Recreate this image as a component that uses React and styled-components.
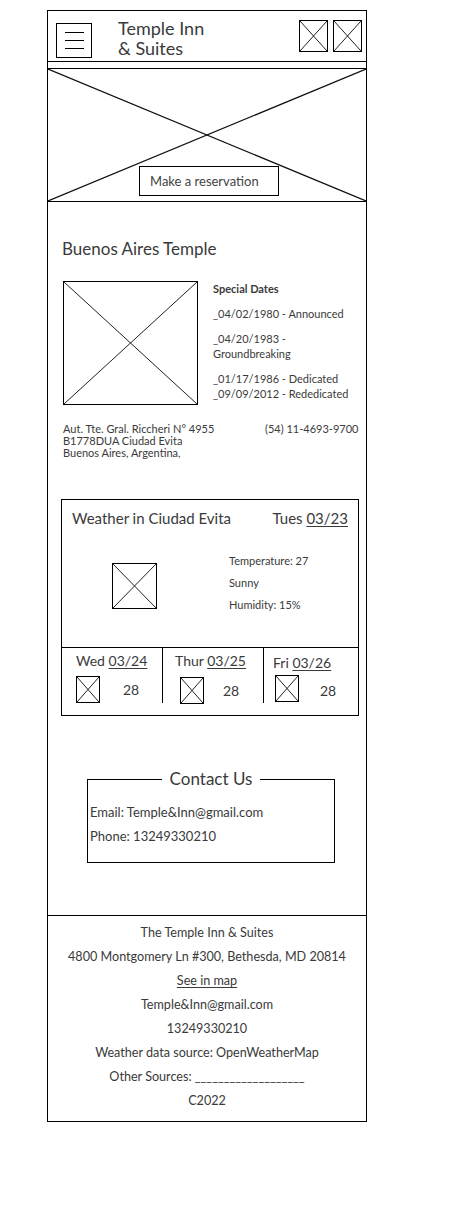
import React from 'react';
import styled, { createGlobalStyle } from 'styled-components';

const Global = createGlobalStyle`
  html, body { margin: 0; padding: 0; background: #fff; }
  body { font-family: Lato, "Noto Sans", sans-serif; color: #333; }
  *, *::before, *::after { box-sizing: border-box; }
`;

const Page = styled.div`
  padding: 10px 0 101px 47px;
`;

const Frame = styled.div`
  width: 320px;
  border: 1px solid #000;
  display: flex;
  flex-direction: column;
`;

/* ---------- placeholder (X box) ---------- */
const PhBox = styled.div`
  width: ${p => p.$w}px;
  height: ${p => p.$h}px;
  border: 1px solid #000;
  flex: none;
  svg { display: block; width: 100%; height: 100%; }
  line { stroke: #222; stroke-width: 1; vector-effect: non-scaling-stroke; }
`;

const XBox = ({ w, h }) => (
  <PhBox $w={w} $h={h}>
    <svg viewBox="0 0 100 100" preserveAspectRatio="none">
      <line x1="0" y1="0" x2="100" y2="100" />
      <line x1="100" y1="0" x2="0" y2="100" />
    </svg>
  </PhBox>
);

/* ---------- header ---------- */
const Header = styled.header`
  height: 51px;
  border-bottom: 1px solid #000;
  display: flex;
  align-items: flex-start;
  padding: 0 4px 0 8px;
`;

const Burger = styled.button`
  width: 36px;
  height: 35px;
  margin-top: 12px;
  border: 1px solid #000;
  background: #fff;
  padding: 0;
  display: flex;
  flex-direction: column;
  align-items: center;
  justify-content: center;
  gap: 7px;
  span {
    display: block;
    width: 19px;
    height: 1.3px;
    background: #000;
  }
`;

const Brand = styled.div`
  margin: 7px 0 0 26px;
  font-size: 18px;
  line-height: 20px;
  color: #3a3a3a;
`;

const HeaderIcons = styled.div`
  margin: 9px 0 0 auto;
  display: flex;
  gap: 5px;
`;

/* ---------- hero ---------- */
const Hero = styled.section`
  position: relative;
  margin: 6px -1px 0;
  height: 134px;
  border: 1.5px solid #000;
  display: flex;
  justify-content: center;
  align-items: flex-end;
  padding: 0 0 5px 4px;
  > svg {
    position: absolute;
    inset: 0;
    width: 100%;
    height: 100%;
  }
  line { stroke: #111; stroke-width: 1.2; vector-effect: non-scaling-stroke; }
`;

const ReserveButton = styled.button`
  position: relative;
  width: 140px;
  height: 30px;
  border: 1px solid #000;
  background: #fff;
  font-family: inherit;
  font-size: 13px;
  color: #444;
  text-align: left;
  padding: 0 0 0 10px;
`;

/* ---------- temple ---------- */
const Heading = styled.h1`
  margin: 37px 0 0 14px;
  font-size: 17px;
  line-height: 20px;
  font-weight: 400;
  color: #3a3a3a;
`;

const TempleRow = styled.div`
  margin-top: 22px;
  padding-left: 15px;
  display: flex;
  align-items: flex-start;
  gap: 15px;
`;

const Dates = styled.div`
  width: 140px;
  font-size: 11px;
  line-height: 15px;
  color: #3a3a3a;
  p { margin: 0 0 10px; }
  p:last-child { margin-bottom: 0; }
  strong { font-weight: 700; }
`;

const AddressRow = styled.div`
  margin-top: 18px;
  padding-left: 15px;
  display: grid;
  grid-template-columns: 202px auto;
  font-size: 11px;
  line-height: 12px;
  color: #3a3a3a;
`;

/* ---------- weather ---------- */
const Weather = styled.section`
  margin: 40px 0 0 13px;
  width: 298px;
  border: 1px solid #000;
`;

const WeatherTop = styled.div`
  height: 147px;
  padding: 8px 10px 0;
`;

const WeatherTitle = styled.div`
  display: flex;
  justify-content: space-between;
  font-size: 15px;
  line-height: 20px;
  color: #3a3a3a;
  u { text-decoration-thickness: 1px; text-underline-offset: 2px; }
`;

const WeatherBody = styled.div`
  display: flex;
  align-items: flex-start;
  margin-top: 22px;
  > div:first-child { margin: 13px 0 0 40px; }
`;

const Stats = styled.div`
  margin-left: 72px;
  font-size: 11px;
  line-height: 22px;
  color: #3a3a3a;
`;

const Forecast = styled.div`
  display: grid;
  grid-template-columns: 101px 101px 94px;
  border-top: 1px solid #000;
  padding-bottom: 12px;
`;

const DayCell = styled.div`
  height: 55px;
  border-right: ${p => (p.$last ? 'none' : '1px solid #000')};
  padding-top: ${p => p.$top}px;
  font-size: 14px;
  line-height: 18px;
  color: #3a3a3a;
  u { text-decoration-thickness: 1px; text-underline-offset: 2px; }
`;

const DayLabel = styled.div`
  padding-left: ${p => p.$indent}px;
`;

const DayTemp = styled.div`
  display: flex;
  align-items: center;
  margin-top: ${p => p.$gapTop}px;
  padding-left: ${p => p.$indent}px;
  gap: ${p => p.$gap}px;
  span { position: relative; top: ${p => p.$shift}px; }
`;

/* ---------- contact ---------- */
const Contact = styled.fieldset`
  margin: 53px 0 0 39px;
  width: 248px;
  border: 1px solid #000;
  padding: 11px 2px 14px;
  font-size: 13px;
  line-height: 24px;
  color: #3a3a3a;
  legend {
    margin: 0 auto;
    padding: 0 8px;
    font-size: 17px;
    line-height: 20px;
  }
`;

/* ---------- footer ---------- */
const Footer = styled.footer`
  margin-top: 52px;
  border-top: 1px solid #000;
  padding: 5px 0 8px;
  text-align: center;
  font-size: 12.6px;
  line-height: 24px;
  color: #3a3a3a;
  a { color: inherit; text-underline-offset: 2px; }
`;

const days = [
  { d: 'Wed', date: '03/24', top: 4, li: 14, ii: 14, gap: 23, gt: 6, sh: 0 },
  { d: 'Thur', date: '03/25', top: 4, li: 12, ii: 17, gap: 19, gt: 7, sh: 0 },
  { d: 'Fri', date: '03/26', top: 6, li: 9, ii: 11, gap: 21, gt: 3, sh: 2 },
];

export default function App() {
  return (
    <>
      <Global />
      <Page>
        <Frame>
          <Header>
            <Burger aria-label="menu">
              <span /><span /><span />
            </Burger>
            <Brand>Temple Inn<br />&amp; Suites</Brand>
            <HeaderIcons>
              <XBox w={29} h={32} />
              <XBox w={29} h={32} />
            </HeaderIcons>
          </Header>

          <Hero>
            <svg viewBox="0 0 100 100" preserveAspectRatio="none">
              <line x1="0" y1="0" x2="100" y2="100" />
              <line x1="100" y1="0" x2="0" y2="100" />
            </svg>
            <ReserveButton>Make a reservation</ReserveButton>
          </Hero>

          <Heading>Buenos Aires Temple</Heading>
          <TempleRow>
            <XBox w={135} h={124} />
            <Dates>
              <p><strong>Special Dates</strong></p>
              <p>_04/02/1980 - Announced</p>
              <p>_04/20/1983 - Groundbreaking</p>
              <p>_01/17/1986 - Dedicated<br />_09/09/2012 - Rededicated</p>
            </Dates>
          </TempleRow>
          <AddressRow>
            <div>Aut. Tte. Gral. Riccheri N° 4955<br />B1778DUA Ciudad Evita<br />Buenos Aires, Argentina,</div>
            <div>(54) 11-4693-9700</div>
          </AddressRow>

          <Weather>
            <WeatherTop>
              <WeatherTitle>
                <span>Weather in Ciudad Evita</span>
                <span>Tues <u>03/23</u></span>
              </WeatherTitle>
              <WeatherBody>
                <XBox w={45} h={46} />
                <Stats>
                  Temperature: 27<br />Sunny<br />Humidity: 15%
                </Stats>
              </WeatherBody>
            </WeatherTop>
            <Forecast>
              {days.map((x, i) => (
                <DayCell key={x.d} $top={x.top} $last={i === days.length - 1}>
                  <DayLabel $indent={x.li}>{x.d} <u>{x.date}</u></DayLabel>
                  <DayTemp $indent={x.ii} $gap={x.gap} $gapTop={x.gt} $shift={x.sh}>
                    <XBox w={24} h={27} />
                    <span>28</span>
                  </DayTemp>
                </DayCell>
              ))}
            </Forecast>
          </Weather>

          <Contact>
            <legend>Contact Us</legend>
            <div>Email: Temple&amp;Inn@gmail.com</div>
            <div>Phone: 13249330210</div>
          </Contact>

          <Footer>
            <div>The Temple Inn &amp; Suites</div>
            <div>4800 Montgomery Ln #300, Bethesda, MD 20814</div>
            <div><a href="#map">See in map</a></div>
            <div>Temple&amp;Inn@gmail.com</div>
            <div>13249330210</div>
            <div>Weather data source: OpenWeatherMap</div>
            <div>Other Sources: ___________________</div>
            <div>C2022</div>
          </Footer>
        </Frame>
      </Page>
    </>
  );
}
